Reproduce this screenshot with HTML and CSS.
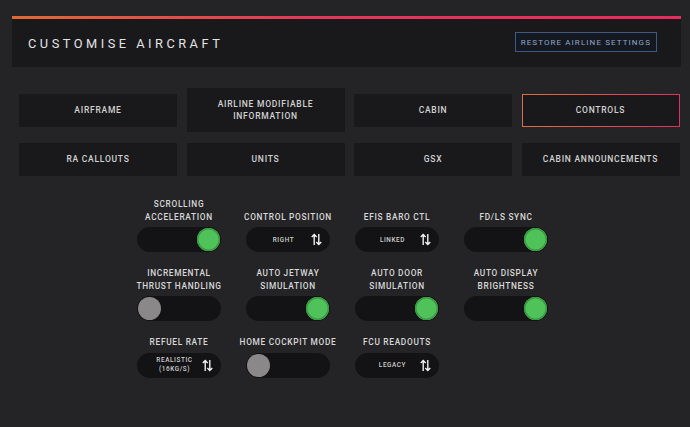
FILE: index.html
```html
<!DOCTYPE html>
<html lang="en">
<head>
<meta charset="utf-8">
<title>Customise Aircraft</title>
<link rel="stylesheet" href="styles.css">
</head>
<body>
<div class="page">
  <header class="header">
    <h1 class="title">CUSTOMISE AIRCRAFT</h1>
    <button class="restore">RESTORE AIRLINE SETTINGS</button>
  </header>

  <nav class="tabs">
    <div class="tab">AIRFRAME</div>
    <div class="tab tall">AIRLINE MODIFIABLE<br>INFORMATION</div>
    <div class="tab">CABIN</div>
    <div class="tab active">CONTROLS</div>
    <div class="tab">RA CALLOUTS</div>
    <div class="tab">UNITS</div>
    <div class="tab">GSX</div>
    <div class="tab">CABIN ANNOUNCEMENTS</div>
  </nav>

  <section class="settings">
    <div class="setting">
      <div class="label">SCROLLING<br>ACCELERATION</div>
      <div class="toggle on"><span class="knob"></span></div>
    </div>
    <div class="setting">
      <div class="label">CONTROL POSITION</div>
      <div class="select"><span class="value">RIGHT</span><svg class="arrows" viewBox="0 0 12 14"><path d="M3.5 13V1.5M0.8 4.2L3.5 1.5L6.2 4.2M8.5 1V12.5M5.8 9.8L8.5 12.5L11.2 9.8"/></svg></div>
    </div>
    <div class="setting">
      <div class="label">EFIS BARO CTL</div>
      <div class="select"><span class="value">LINKED</span><svg class="arrows" viewBox="0 0 12 14"><path d="M3.5 13V1.5M0.8 4.2L3.5 1.5L6.2 4.2M8.5 1V12.5M5.8 9.8L8.5 12.5L11.2 9.8"/></svg></div>
    </div>
    <div class="setting">
      <div class="label">FD/LS SYNC</div>
      <div class="toggle on"><span class="knob"></span></div>
    </div>

    <div class="setting">
      <div class="label">INCREMENTAL<br>THRUST HANDLING</div>
      <div class="toggle"><span class="knob"></span></div>
    </div>
    <div class="setting">
      <div class="label">AUTO JETWAY<br>SIMULATION</div>
      <div class="toggle on"><span class="knob"></span></div>
    </div>
    <div class="setting">
      <div class="label">AUTO DOOR<br>SIMULATION</div>
      <div class="toggle on"><span class="knob"></span></div>
    </div>
    <div class="setting">
      <div class="label">AUTO DISPLAY<br>BRIGHTNESS</div>
      <div class="toggle on"><span class="knob"></span></div>
    </div>

    <div class="setting">
      <div class="label">REFUEL RATE</div>
      <div class="select"><span class="value two">REALISTIC<br>(16KG/S)</span><svg class="arrows" viewBox="0 0 12 14"><path d="M3.5 13V1.5M0.8 4.2L3.5 1.5L6.2 4.2M8.5 1V12.5M5.8 9.8L8.5 12.5L11.2 9.8"/></svg></div>
    </div>
    <div class="setting">
      <div class="label">HOME COCKPIT MODE</div>
      <div class="toggle"><span class="knob"></span></div>
    </div>
    <div class="setting">
      <div class="label">FCU READOUTS</div>
      <div class="select"><span class="value">LEGACY</span><svg class="arrows" viewBox="0 0 12 14"><path d="M3.5 13V1.5M0.8 4.2L3.5 1.5L6.2 4.2M8.5 1V12.5M5.8 9.8L8.5 12.5L11.2 9.8"/></svg></div>
    </div>
  </section>
</div>
</body>
</html>
```

FILE: styles.css
```css
* { box-sizing: border-box; }

html, body {
  margin: 0;
  padding: 0;
  background: #242427;
  width: 690px;
  height: 427px;
  overflow: hidden;
  font-family: Roboto, "Liberation Sans", sans-serif;
  color: #d6d6d6;
}

.page {
  padding: 16px 9px 0 11px;
}

.header {
  height: 51px;
  background: #19191b;
  border-top: 3px solid transparent;
  border-image: linear-gradient(90deg, #e06a34 0%, #e2385a 45%, #e82a5e 100%) 1;
  display: flex;
  align-items: center;
  justify-content: space-between;
  padding: 0 24px 0 16px;
  margin: 0 0 0 1px;
}

.title {
  margin: 0;
  font-size: 12.8px;
  font-weight: 400;
  letter-spacing: 3.5px;
  color: #e4e4e4;
}

.restore {
  font-family: Roboto, "Liberation Sans", sans-serif;
  background: #141820;
  border: 1px solid #3f5a80;
  color: #93a7c4;
  font-size: 8px;
  letter-spacing: 1.1px;
  height: 20px;
  padding: 0 5px;
  margin-top: -2px;
}

.tabs {
  margin-top: 21px;
  display: grid;
  grid-template-columns: repeat(4, 158px);
  grid-template-rows: 44px 33px;
  column-gap: 9.5px;
  row-gap: 11px;
  align-items: center;
  padding-left: 8px;
}

.tab {
  height: 33px;
  background: #19191b;
  display: flex;
  align-items: center;
  justify-content: center;
  text-align: center;
  font-size: 8.5px;
  font-weight: 500;
  letter-spacing: 0.75px;
  line-height: 12.5px;
  color: #d2d2d2;
}

.tab.tall { height: 44px; }

.tab.active {
  border: 1.5px solid transparent;
  border-image: linear-gradient(90deg, #de7040, #e03060) 1;
  height: 33px;
}

.settings {
  margin-top: 22px;
  margin-left: 126px;
  display: grid;
  grid-template-columns: repeat(4, 84px);
  column-gap: 25px;
  row-gap: 15px;
  align-items: end;
}

.setting {
  display: flex;
  flex-direction: column;
  align-items: center;
  gap: 4px;
}

.label {
  font-size: 8.3px;
  font-weight: 500;
  letter-spacing: 0.7px;
  line-height: 12.5px;
  text-align: center;
  color: #d8d8d8;
  white-space: nowrap;
}

.toggle {
  width: 84px;
  height: 25px;
  border-radius: 12.5px;
  background: #131315;
  display: flex;
  align-items: center;
  padding: 0 1px;
}

.knob {
  width: 23px;
  height: 23px;
  border-radius: 50%;
  background: #8a8888;
}

.toggle.on { justify-content: flex-end; }

.toggle.on .knob {
  background: #4fc35a;
  box-shadow: inset 0 0 0 1.5px #3a9a44;
}

.select {
  width: 84px;
  height: 25px;
  border-radius: 12.5px;
  background: #131315;
  display: flex;
  align-items: center;
  padding: 0 8px 0 10px;
}

.value {
  flex: 1;
  text-align: center;
  font-size: 6.4px;
  font-weight: 500;
  letter-spacing: 0.6px;
  color: #cfcfcf;
}

.value.two { line-height: 9px; }

.arrows {
  width: 11px;
  height: 13px;
  fill: none;
  stroke: #f2f2f2;
  stroke-width: 1.5;
}
```
